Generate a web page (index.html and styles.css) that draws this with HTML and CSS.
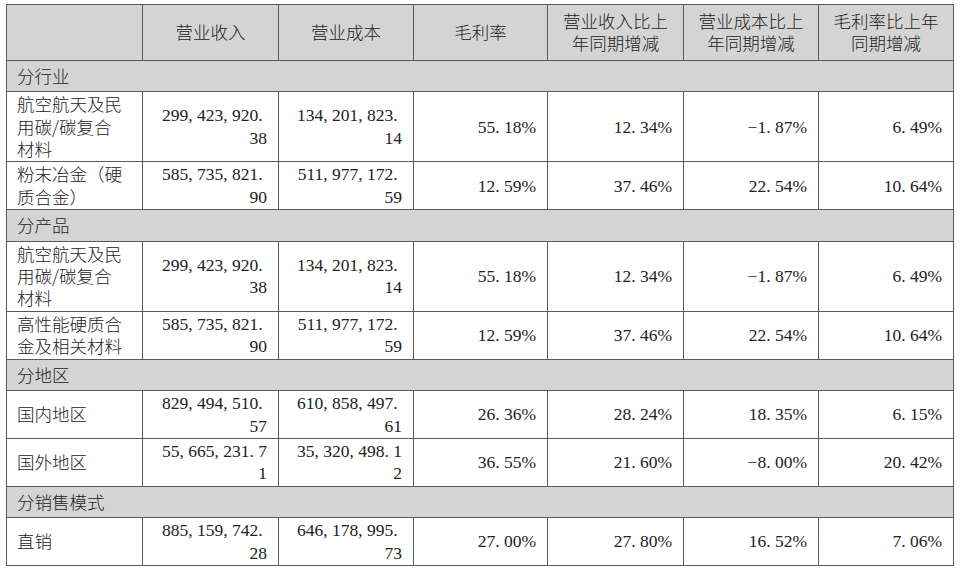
FILE: index.html
```html
<!DOCTYPE html>
<html lang="zh-CN">
<head>
<meta charset="utf-8">
<title>主营业务分析</title>
<link rel="stylesheet" href="styles.css">
</head>
<body>
<table class="fin">
  <colgroup>
    <col class="c1"><col class="c2"><col class="c3"><col class="c4"><col class="c5"><col class="c6"><col class="c7">
  </colgroup>
  <thead>
    <tr class="head">
      <th></th>
      <th>营业收入</th>
      <th>营业成本</th>
      <th>毛利率</th>
      <th>营业收入比上年同期增减</th>
      <th>营业成本比上年同期增减</th>
      <th>毛利率比上年同期增减</th>
    </tr>
  </thead>
  <tbody>
    <tr class="sec"><td colspan="7">分行业</td></tr>
    <tr>
      <td class="name">航空航天及民用碳/碳复合材料</td>
      <td class="num">299<span class="pt">,</span>423<span class="pt">,</span>920<span class="pt">.</span>38</td>
      <td class="num">134<span class="pt">,</span>201<span class="pt">,</span>823<span class="pt">.</span>14</td>
      <td class="num">55<span class="pt">.</span>18%</td>
      <td class="num">12<span class="pt">.</span>34%</td>
      <td class="num">−1<span class="pt">.</span>87%</td>
      <td class="num">6<span class="pt">.</span>49%</td>
    </tr>
    <tr>
      <td class="name">粉末冶金（硬质合金）</td>
      <td class="num">585<span class="pt">,</span>735<span class="pt">,</span>821<span class="pt">.</span>90</td>
      <td class="num">511<span class="pt">,</span>977<span class="pt">,</span>172<span class="pt">.</span>59</td>
      <td class="num">12<span class="pt">.</span>59%</td>
      <td class="num">37<span class="pt">.</span>46%</td>
      <td class="num">22<span class="pt">.</span>54%</td>
      <td class="num">10<span class="pt">.</span>64%</td>
    </tr>
    <tr class="sec"><td colspan="7">分产品</td></tr>
    <tr>
      <td class="name">航空航天及民用碳/碳复合材料</td>
      <td class="num">299<span class="pt">,</span>423<span class="pt">,</span>920<span class="pt">.</span>38</td>
      <td class="num">134<span class="pt">,</span>201<span class="pt">,</span>823<span class="pt">.</span>14</td>
      <td class="num">55<span class="pt">.</span>18%</td>
      <td class="num">12<span class="pt">.</span>34%</td>
      <td class="num">−1<span class="pt">.</span>87%</td>
      <td class="num">6<span class="pt">.</span>49%</td>
    </tr>
    <tr>
      <td class="name">高性能硬质合金及相关材料</td>
      <td class="num">585<span class="pt">,</span>735<span class="pt">,</span>821<span class="pt">.</span>90</td>
      <td class="num">511<span class="pt">,</span>977<span class="pt">,</span>172<span class="pt">.</span>59</td>
      <td class="num">12<span class="pt">.</span>59%</td>
      <td class="num">37<span class="pt">.</span>46%</td>
      <td class="num">22<span class="pt">.</span>54%</td>
      <td class="num">10<span class="pt">.</span>64%</td>
    </tr>
    <tr class="sec"><td colspan="7">分地区</td></tr>
    <tr>
      <td class="name">国内地区</td>
      <td class="num">829<span class="pt">,</span>494<span class="pt">,</span>510<span class="pt">.</span>57</td>
      <td class="num">610<span class="pt">,</span>858<span class="pt">,</span>497<span class="pt">.</span>61</td>
      <td class="num">26<span class="pt">.</span>36%</td>
      <td class="num">28<span class="pt">.</span>24%</td>
      <td class="num">18<span class="pt">.</span>35%</td>
      <td class="num">6<span class="pt">.</span>15%</td>
    </tr>
    <tr>
      <td class="name">国外地区</td>
      <td class="num">55<span class="pt">,</span>665<span class="pt">,</span>231<span class="pt">.</span>71</td>
      <td class="num">35<span class="pt">,</span>320<span class="pt">,</span>498<span class="pt">.</span>12</td>
      <td class="num">36<span class="pt">.</span>55%</td>
      <td class="num">21<span class="pt">.</span>60%</td>
      <td class="num">−8<span class="pt">.</span>00%</td>
      <td class="num">20<span class="pt">.</span>42%</td>
    </tr>
    <tr class="sec"><td colspan="7">分销售模式</td></tr>
    <tr>
      <td class="name">直销</td>
      <td class="num">885<span class="pt">,</span>159<span class="pt">,</span>742<span class="pt">.</span>28</td>
      <td class="num">646<span class="pt">,</span>178<span class="pt">,</span>995<span class="pt">.</span>73</td>
      <td class="num">27<span class="pt">.</span>00%</td>
      <td class="num">27<span class="pt">.</span>80%</td>
      <td class="num">16<span class="pt">.</span>52%</td>
      <td class="num">7<span class="pt">.</span>06%</td>
    </tr>
  </tbody>
</table>
</body>
</html>
```
FILE: styles.css
```css
html, body {
  margin: 0;
  background: #ffffff;
}
body {
  padding: 4px 0 0 6px;
}
.fin {
  border-collapse: collapse;
  table-layout: fixed;
  width: 947px;
  color: #222222;
  font-family: "Noto Sans CJK SC", "Liberation Sans", sans-serif;
  font-size: 17.5px;
  font-weight: 300;
  line-height: 22.4px;
}
.c1 { width: 136px; }
.c2 { width: 136px; }
.c3 { width: 135px; }
.c4 { width: 134px; }
.c5 { width: 136px; }
.c6 { width: 135px; }
.c7 { width: 135px; }
.fin th, .fin td {
  border: 1px solid #5a5a5a;
  vertical-align: middle;
}
.head th {
  background: #d4d4d4;
  font-weight: 300;
  text-align: center;
  padding: 5px 12px 5px 12px;
}
.sec td {
  background: #d4d4d4;
  padding: 4px 10px;
  text-align: left;
}
.name {
  text-align: left;
  padding: 1px 16px 1px 10px;
}
.num {
  font-family: "Liberation Serif", "Noto Sans CJK SC", serif;
  font-weight: 400;
  text-align: right;
  padding: 1px 11px 1px 16px;
  overflow-wrap: anywhere;
}
.pt {
  letter-spacing: 0.25em;
}
```
